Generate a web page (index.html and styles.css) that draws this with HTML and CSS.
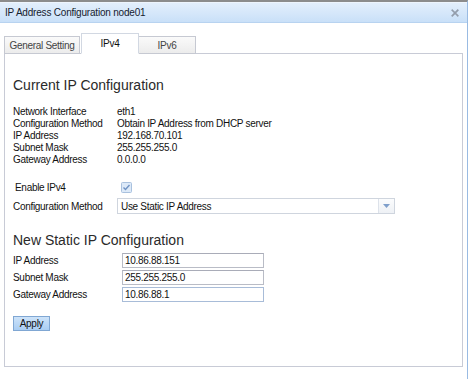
FILE: index.html
```html
<!DOCTYPE html>
<html>
<head>
<meta charset="utf-8">
<title>IP Address Configuration node01</title>
<link rel="stylesheet" href="styles.css">
</head>
<body>
<div class="dialog">
  <div class="titlebar">
    <span class="title">IP Address Configuration node01</span>
    <span class="close"><svg width="8" height="8" viewBox="0 0 8 8"><path d="M1.3 1.3L6.7 6.7M6.7 1.3L1.3 6.7" stroke="#939dab" stroke-width="1.7" stroke-linecap="square"/></svg></span>
  </div>
  <div class="body">
    <div class="tabs">
      <div class="tab">General Setting</div>
      <div class="tab active">IPv4</div>
      <div class="tab">IPv6</div>
    </div>
    <div class="panel">
      <h2 class="heading first">Current IP Configuration</h2>
      <div class="info">
        <span>Network Interface</span><span>eth1</span>
        <span>Configuration Method</span><span>Obtain IP Address from DHCP server</span>
        <span>IP Address</span><span>192.168.70.101</span>
        <span>Subnet Mask</span><span>255.255.255.0</span>
        <span>Gateway Address</span><span>0.0.0.0</span>
      </div>
      <div class="enable-row">
        <span class="enable-label">Enable IPv4</span>
        <span class="check"><svg width="11" height="11" viewBox="0 0 11 11"><rect x="0.5" y="0.5" width="10" height="10" rx="1" fill="#dce9f8" stroke="#a9c1de"/><path d="M2.5 5.5L4.5 7.5L8.5 3" fill="none" stroke="#6f93c4" stroke-width="1.4"/></svg></span>
      </div>
      <div class="method-row">
        <span class="method-label">Configuration Method</span>
        <div class="select">
          <span class="select-text">Use Static IP Address</span>
          <span class="trigger"><svg width="7" height="4" viewBox="0 0 7 4"><path d="M0 0H7L3.5 4Z" fill="#7f9fcb"/></svg></span>
        </div>
      </div>
      <h2 class="heading second">New Static IP Configuration</h2>
      <div class="static">
        <span class="lbl">IP Address</span><div class="input">10.86.88.151</div>
        <span class="lbl">Subnet Mask</span><div class="input">255.255.255.0</div>
        <span class="lbl">Gateway Address</span><div class="input focus">10.86.88.1</div>
      </div>
      <button class="apply">Apply</button>
    </div>
  </div>
</div>
</body>
</html>
```
FILE: styles.css
```css
html, body {
  margin: 0;
  padding: 0;
  background: #ffffff;
}
body {
  font-family: "Liberation Sans", Arial, sans-serif;
  font-size: 10px;
  letter-spacing: -0.3px;
  color: #111;
}
.dialog {
  width: 467px;
  height: 377px;
  border-top: 2px solid #8c8c8c;
  border-right: 1px solid #99bbe3;
  background: #fff;
}
.titlebar {
  height: 19px;
  display: flex;
  align-items: center;
  justify-content: space-between;
  padding: 0 8px 0 5px;
  background: linear-gradient(#e3effc, #c9e0f8);
  border-top: 1px solid #eef5fd;
  border-bottom: 1px solid #b8d3f0;
}
.title {
  color: #15212f;
  font-size: 10px;
  letter-spacing: -0.2px;
}
.close {
  display: flex;
  margin-top: 1px;
}
.body {
  padding: 10px 0 0 4px;
}
.tabs {
  display: flex;
  align-items: flex-end;
  width: 459px;
  height: 20px;
  border-bottom: 1px solid #c8cbd6;
}
.tab {
  height: 16px;
  margin-bottom: -1px;
  display: flex;
  align-items: center;
  justify-content: center;
  border: 1px solid #c6c9d2;
  background: linear-gradient(#fafafa, #ececec);
  color: #444;
  width: 56px;
}
.tab:first-child {
  width: 74px;
  margin-right: 1px;
}
.tab.active {
  height: 19px;
  background: #fff;
  border-color: #d2d8e2;
  border-bottom-color: #fff;
  color: #111;
}
.tab.active + .tab {
  border-left: none;
}
.panel {
  height: 312px;
  border: 1px solid #c8cbd6;
  border-top: none;
  padding: 0 8px;
  box-sizing: content-box;
  width: 441px;
}
.heading {
  margin: 0;
  font-size: 14px;
  line-height: 17px;
  font-weight: normal;
  letter-spacing: 0;
  color: #2a2a2a;
}
.heading.first {
  padding-top: 23px;
}
.info {
  display: grid;
  grid-template-columns: 104px 1fr;
  line-height: 12px;
  margin-top: 12px;
}
.enable-row {
  display: flex;
  align-items: center;
  height: 13px;
  margin-top: 15px;
  padding-left: 2px;
}
.enable-label {
  width: 106px;
}
.check {
  display: flex;
}
.method-row {
  display: flex;
  align-items: center;
  margin-top: 4px;
}
.method-label {
  width: 104px;
}
.select {
  width: 276px;
  height: 14px;
  display: flex;
  align-items: center;
  border: 1px solid #cfd5de;
}
.select-text {
  flex: 1;
  padding-left: 3px;
}
.trigger {
  width: 15px;
  height: 14px;
  display: flex;
  align-items: center;
  justify-content: center;
  border-left: 1px solid #dde2ea;
  background: linear-gradient(#fbfcfd, #eef1f5);
}
.heading.second {
  margin-top: 18px;
}
.static {
  display: grid;
  grid-template-columns: 109px 142px;
  row-gap: 2px;
  margin-top: 4px;
  align-items: center;
}
.input {
  height: 13px;
  line-height: 13px;
  border: 1px solid #b9bcc6;
  border-top-color: #a9acb8;
  padding-left: 2px;
}
.input.focus {
  border-color: #a8bcd8;
}
.apply {
  margin-top: 14px;
  width: 37px;
  height: 15px;
  padding: 0;
  font-family: "Liberation Sans", Arial, sans-serif;
  font-size: 10px;
  letter-spacing: -0.3px;
  color: #111;
  border: 1px solid #80a7d3;
  background: linear-gradient(#cde3f9, #a9cdf3);
  display: flex;
  align-items: center;
  justify-content: center;
}
```
